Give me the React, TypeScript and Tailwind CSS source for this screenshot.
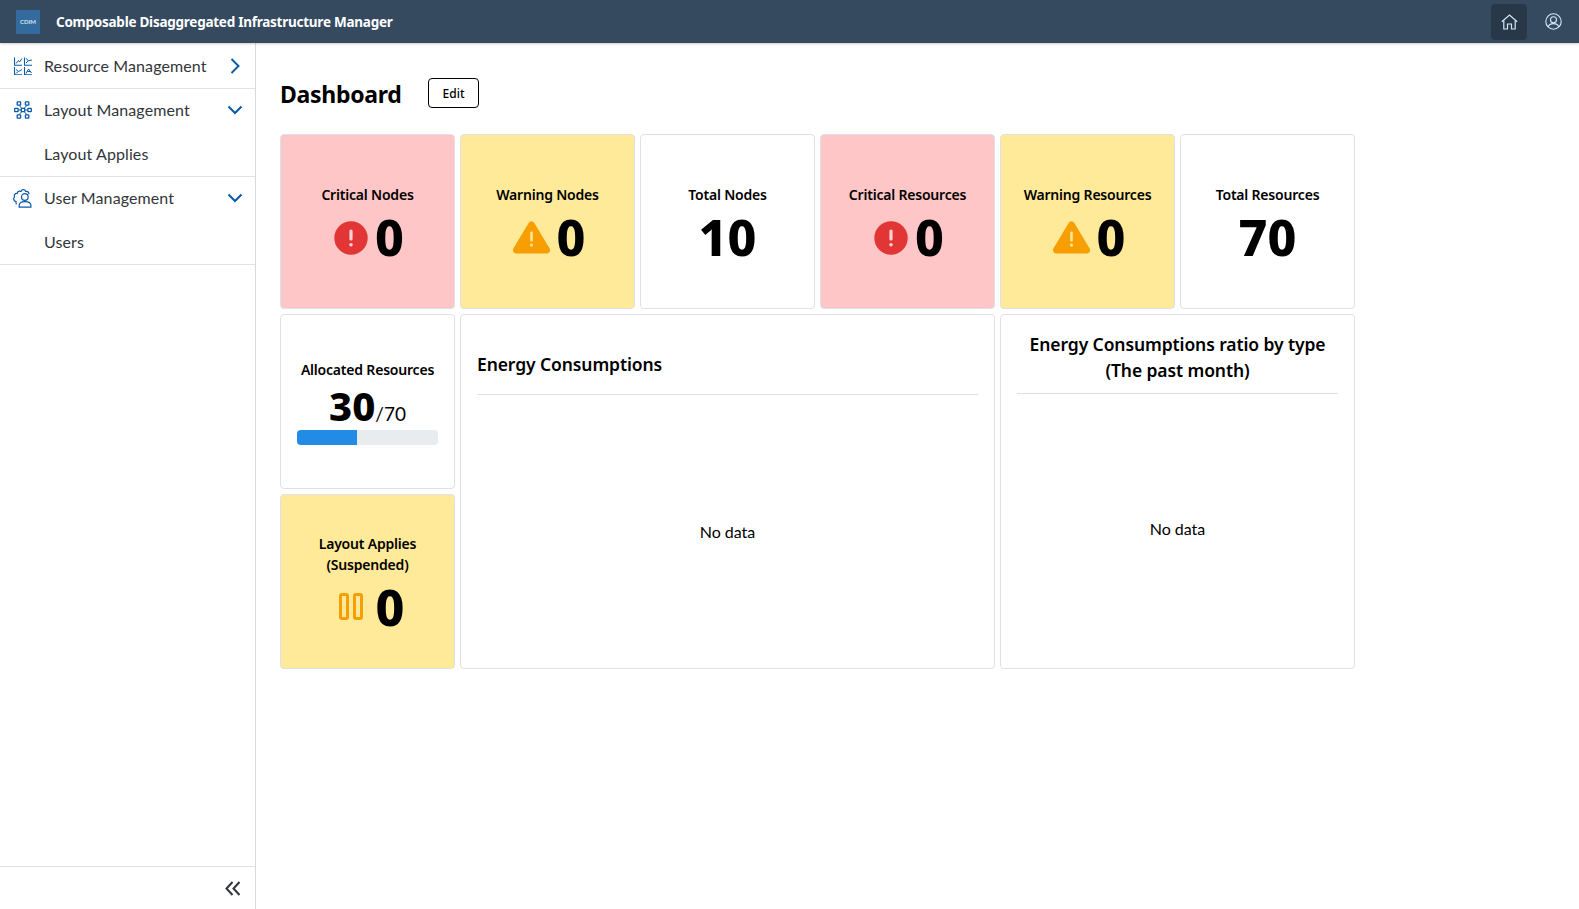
import React from "react";

const F = "font-['Lato','Noto_Sans',sans-serif]";
const B = "font-['Noto_Sans','Lato',sans-serif]";

function CritIcon() {
  return (
    <svg width="34" height="34" viewBox="0 0 34 34" className="shrink-0 ml-[3px] mt-[2px]">
      <circle cx="17" cy="17" r="16.7" fill="#e23636" />
      <rect x="15.4" y="8.5" width="3.2" height="11" rx="1.5" fill="#fbd0d0" />
      <circle cx="17" cy="23.7" r="1.8" fill="#fbd0d0" />
    </svg>
  );
}

function WarnIcon() {
  return (
    <svg width="37" height="33" viewBox="0 0 37 33" className="shrink-0 ml-[3px] mt-[2px]">
      <path d="M18.5 4 L33.5 29 H3.5 Z" fill="#f79e02" stroke="#f79e02" strokeWidth="7" strokeLinejoin="round" />
      <rect x="17.2" y="10.5" width="2.6" height="10" rx="1.3" fill="#fde995" />
      <circle cx="18.5" cy="24" r="1.6" fill="#fde995" />
    </svg>
  );
}

function PauseIcon() {
  return (
    <svg width="24" height="27" viewBox="0 0 24 27" className="shrink-0">
      <rect x="1.5" y="1.5" width="7" height="24" rx="1.5" fill="none" stroke="#f79e02" strokeWidth="3" />
      <rect x="15.5" y="1.5" width="7" height="24" rx="1.5" fill="none" stroke="#f79e02" strokeWidth="3" />
    </svg>
  );
}

function Card({ title, value, tone, icon }: { title: string; value: string; tone?: "red" | "yellow"; icon?: React.ReactNode }) {
  const bg = tone === "red" ? "bg-[#ffc6c7]" : tone === "yellow" ? "bg-[#feea99]" : "bg-white";
  return (
    <div className={`${B} ${bg} h-[175px] w-[175px] rounded-[4px] border border-[#dfe1e8] flex flex-col items-center justify-center pt-[7px]`}>
      <div className="text-[14px] font-semibold tracking-[-0.2px] leading-[21px] text-black text-center">{title}</div>
      <div className="mt-[2px] flex items-center justify-center gap-[7px] h-[60px]">
        {icon}
        <span className="text-[50px] font-extrabold leading-[60px] text-black">{value}</span>
      </div>
    </div>
  );
}

function ChevronRight() {
  return (
    <svg width="14" height="18" viewBox="0 0 14 18" fill="none">
      <path d="M3.5 2 L10.5 9 L3.5 16" stroke="#0a5aa8" strokeWidth="2" />
    </svg>
  );
}
function ChevronDown() {
  return (
    <svg width="16" height="12" viewBox="0 0 16 12" fill="none">
      <path d="M1.5 2.5 L8 9 L14.5 2.5" stroke="#0a5aa8" strokeWidth="2" />
    </svg>
  );
}

function ChartsIcon() {
  const c = "#0a5aa8";
  const cell = (x: number, y: number, d: string) => (
    <g transform={`translate(${x} ${y})`} key={`${x}${y}`}>
      <path d="M0.5 0 V7.7 H8" stroke={c} strokeWidth="1.1" fill="none" />
      <path d={d} stroke={c} strokeWidth="1" fill="none" />
    </g>
  );
  return (
    <svg width="18" height="18" viewBox="0 0 18 18">
      {cell(0, 0.5, "M2 6 L4.5 3 L5.5 4.5 L8 1")}
      {cell(10, 0.5, "M2 1 L4.5 3.2 L2 5.5 M4.5 3.2 L8 2.5")}
      {cell(0, 10, "M2 2.5 L4.5 4.5 L8 2.5 M4 4.5 L2 6.5")}
      {cell(10, 10, "M2 6.5 L4.5 2 L7.5 6 M3.5 4.5 H6.5")}
    </svg>
  );
}

function NodesIcon() {
  const c = "#0a5aa8";
  return (
    <svg width="18" height="18" viewBox="0 0 18 18" fill="none" stroke={c} strokeWidth="1.3">
      <rect x="3.2" y="0.8" width="3.4" height="3.4" rx="0.5" />
      <rect x="11.4" y="0.8" width="3.4" height="3.4" rx="0.5" />
      <rect x="0.7" y="7.3" width="3.4" height="3.4" rx="0.5" />
      <rect x="7.3" y="7.3" width="3.4" height="3.4" rx="0.5" />
      <rect x="13.9" y="7.3" width="3.4" height="3.4" rx="0.5" />
      <rect x="3.2" y="13.8" width="3.4" height="3.4" rx="0.5" />
      <rect x="11.4" y="13.8" width="3.4" height="3.4" rx="0.5" />
      <path d="M4.1 9 H7.3 M10.7 9 H13.9 M5 4.2 L7.8 7.3 M13 4.2 L10.2 7.3 M5 13.8 L7.8 10.7 M13 13.8 L10.2 10.7" strokeWidth="1" />
    </svg>
  );
}

function UserGearIcon() {
  const c = "#0a5aa8";
  return (
    <svg width="19" height="19" viewBox="0 0 19 19" fill="none" stroke={c} strokeWidth="1.2">
      <path d="M3.8 15.2 C2.6 14.8 3 13.3 3 12.5 C1.6 12.3 0.7 11.5 0.7 9.8 C0.7 8.8 1.4 8.4 1.5 7.8 C1.1 6.9 1.2 5.8 2 5 C2.7 4.3 3.5 4.4 4.2 4.5 C4.4 3.2 5 2.4 6.3 2.2 C7 2.1 7.6 2.5 8 2.5 C8.4 1.5 9.2 0.7 10.4 0.7 C11.6 0.7 12.3 1.5 12.7 2.5 C13.5 2.2 14.5 2.3 15.2 3 C15.9 3.7 16 4.6 15.8 5.4" />
      <circle cx="11.8" cy="8" r="3.3" />
      <path d="M6.2 18.2 V16.3 C6.2 13.8 8.3 12.6 11.8 12.6 C15.3 12.6 17.9 13.8 17.9 16.3 V18.2 Z" />
    </svg>
  );
}

function NavItem({ icon, label, chevron, border }: { icon?: React.ReactNode; label: string; chevron?: React.ReactNode; border?: boolean }) {
  return (
    <div className={`h-[44px] pb-[2px] flex items-center ${border ? "border-b border-[#e1e1e1]" : ""}`}>
      <div className="w-[44px] flex justify-center pl-[1px] shrink-0">{icon}</div>
      <div className="text-[16px] tracking-[0.1px] leading-[24px] whitespace-nowrap text-[#32363a]">{label}</div>
      <div className="ml-auto w-[40px] flex justify-center">{chevron}</div>
    </div>
  );
}

function Chart({ title, width, twoLine }: { title: string; width: string; twoLine?: boolean }) {
  return (
    <div className={`${width} h-[355px] rounded-[4px] border border-[#dfe1e8] bg-white flex flex-col px-[16px]`}>
      <div className={`${B} border-b border-[#dfe1e8] flex items-center ${twoLine ? "h-[79px] justify-center text-center pt-[5px]" : "h-[80px] pt-[18px]"} text-[17.5px] tracking-[-0.1px] font-semibold leading-[26px] text-black`}>
        {title}
      </div>
      <div className={`flex-1 flex items-center justify-center text-[16px] text-black ${twoLine ? "pb-[4px]" : ""}`}>No data</div>
    </div>
  );
}

export default function App() {
  return (
    <div className={`${F} h-[909px] w-full bg-white flex flex-col overflow-hidden`}>
      <header className="relative z-10 h-[43px] shrink-0 bg-[#354a5f] flex items-center shadow-[0_1px_2px_rgba(0,0,0,0.2)]">
        <div className="ml-[16px] h-[24px] w-[24px] bg-[#336b9f] flex items-center justify-center text-[6px] font-bold text-[#d5e2ee]">CDIM</div>
        <div className={`${B} ml-[16px] pt-[2px] text-[13.5px] tracking-[-0.25px] font-bold text-white`}>Composable Disaggregated Infrastructure Manager</div>
        <div className="ml-auto mr-[8px] flex items-center gap-[8px]">
          <div className="h-[36px] w-[36px] rounded-[4px] bg-[#283848] flex items-center justify-center">
            <svg width="17" height="16" viewBox="0 0 17 16" fill="none" stroke="#d1e8ff" strokeWidth="1.2">
              <path d="M0.8 7.8 L8.5 1 L16.2 7.8" />
              <path d="M2.8 6.5 V15 H6.5 V10 H10.5 V15 H14.2 V6.5" />
            </svg>
          </div>
          <div className="h-[36px] w-[36px] flex items-center justify-center">
            <svg width="17" height="17" viewBox="0 0 17 17" fill="none" stroke="#d1e8ff" strokeWidth="1.1">
              <circle cx="8.5" cy="8.5" r="7.7" />
              <circle cx="8.5" cy="6.8" r="3" />
              <path d="M3.2 14 C3.8 11.5 6 10.6 8.5 10.6 C11 10.6 13.2 11.5 13.8 14" />
            </svg>
          </div>
        </div>
      </header>
      <div className="flex flex-1 min-h-0">
        <aside className="w-[256px] shrink-0 border-r border-[#d9d9d9] flex flex-col bg-white">
          <div className="pt-[2px]">
            <NavItem icon={<ChartsIcon />} label="Resource Management" chevron={<ChevronRight />} border />
            <NavItem icon={<NodesIcon />} label="Layout Management" chevron={<ChevronDown />} />
            <NavItem label="Layout Applies" border />
            <NavItem icon={<UserGearIcon />} label="User Management" chevron={<ChevronDown />} />
            <NavItem label="Users" border />
          </div>
          <div className="mt-auto h-[43px] border-t border-[#e1e1e1] flex items-center justify-end pr-[14px]">
            <svg width="16" height="15" viewBox="0 0 16 15" fill="none" stroke="#32363a" strokeWidth="2">
              <path d="M7.5 1 L1.5 7.5 L7.5 14" />
              <path d="M14.5 1 L8.5 7.5 L14.5 14" />
            </svg>
          </div>
        </aside>
        <main className="flex-1 pl-[24px]">
          <div className="flex items-center h-[91px] pt-[10px]">
            <h1 className={`${B} text-[23px] tracking-[-0.3px] font-bold text-black leading-[32px] w-[148px] pt-[1px]`}>Dashboard</h1>
            <button className={`${B} h-[30px] w-[51px] mb-[1px] pt-[2px] rounded-[4px] border border-black bg-white text-[12px] font-medium text-black`}>Edit</button>
          </div>
          <div className="flex flex-col gap-[5px] w-[1075px]">
            <div className="flex gap-[5px]">
              <Card title="Critical Nodes" value="0" tone="red" icon={<CritIcon />} />
              <Card title="Warning Nodes" value="0" tone="yellow" icon={<WarnIcon />} />
              <Card title="Total Nodes" value="10" />
              <Card title="Critical Resources" value="0" tone="red" icon={<CritIcon />} />
              <Card title="Warning Resources" value="0" tone="yellow" icon={<WarnIcon />} />
              <Card title="Total Resources" value="70" />
            </div>
            <div className="flex gap-[5px]">
              <div className="flex flex-col gap-[5px]">
                <div className={`${B} h-[175px] w-[175px] rounded-[4px] border border-[#dfe1e8] bg-white flex flex-col items-center pt-[44px] px-[16px]`}>
                  <div className="text-[14px] font-semibold tracking-[-0.2px] leading-[21px] text-black whitespace-nowrap">Allocated Resources</div>
                  <div className="text-black leading-[48px] mt-[2px] h-[41px] flex items-baseline">
                    <span className="text-[40px] font-extrabold">30</span>
                    <span className={`${F} text-[19px]`}>/70</span>
                  </div>
                  <div className="mt-[7px] w-full h-[15px] rounded-[4px] bg-[#e9ecef] overflow-hidden">
                    <div className="h-full bg-[#228be6]" style={{ width: "42.86%" }} />
                  </div>
                </div>
                <div className={`${B} h-[175px] w-[175px] rounded-[4px] border border-[#dfe1e8] bg-[#feea99] flex flex-col items-center justify-center pt-[6px]`}>
                  <div className="text-[14px] font-semibold tracking-[-0.2px] leading-[21px] text-black text-center">
                    Layout Applies
                    <br />
                    (Suspended)
                  </div>
                  <div className="mt-[2px] ml-[8px] flex items-center justify-center gap-[13px] h-[60px]">
                    <PauseIcon />
                    <span className="text-[50px] font-extrabold leading-[60px] text-black">0</span>
                  </div>
                </div>
              </div>
              <Chart title="Energy Consumptions" width="w-[535px]" />
              <Chart title="Energy Consumptions ratio by type (The past month)" width="w-[355px]" twoLine />
            </div>
          </div>
        </main>
      </div>
    </div>
  );
}
